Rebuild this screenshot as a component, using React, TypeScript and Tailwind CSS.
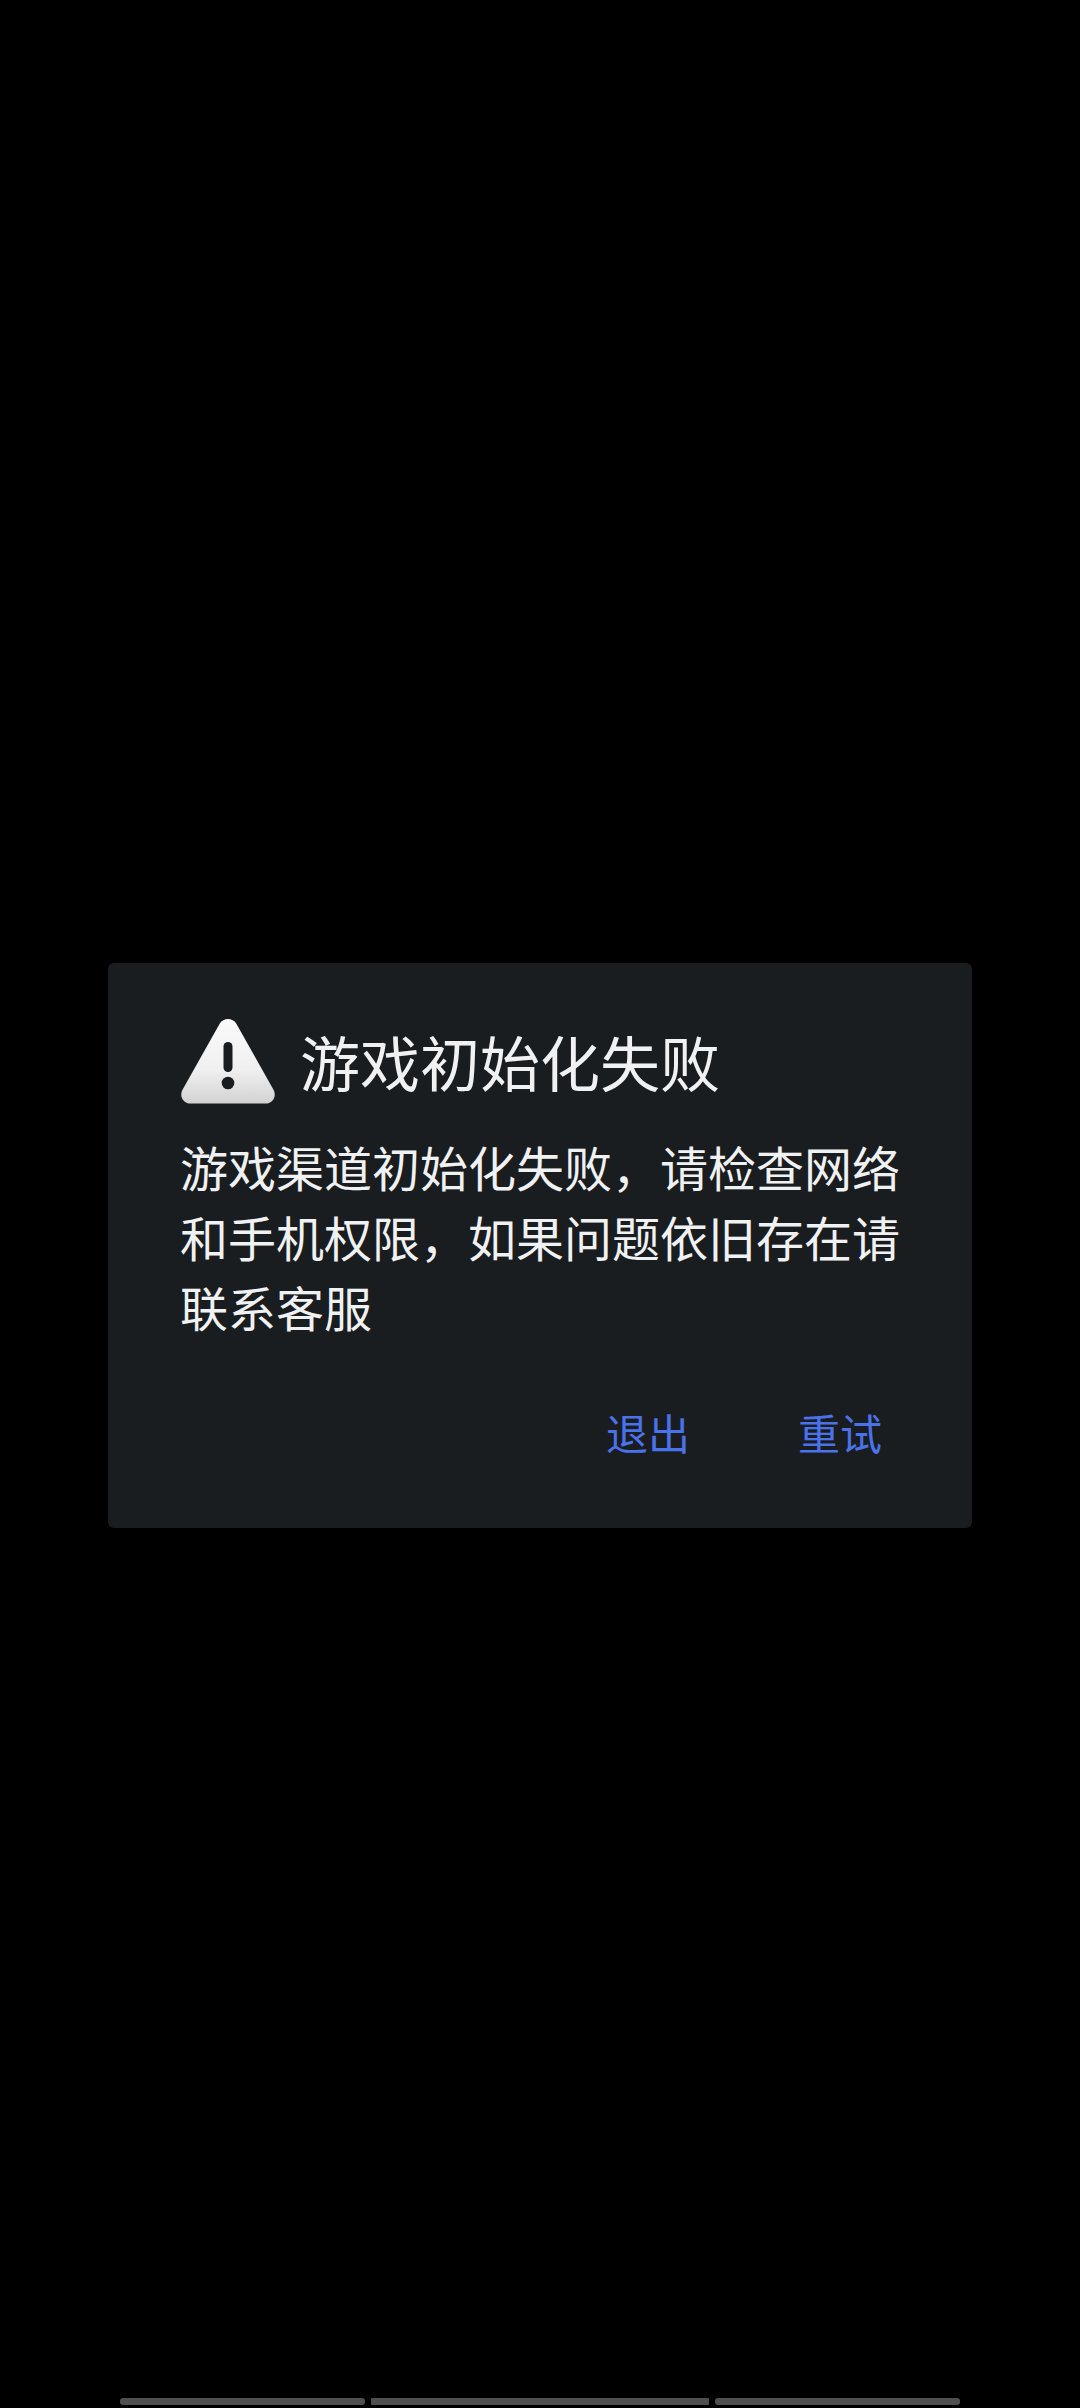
const cjk = "font-['Noto_Sans_CJK_SC','Noto_Sans',sans-serif]";

function WarningIcon() {
  return (
    <svg width="96" height="86" viewBox="0 0 96 86" className="shrink-0 blur-[0.6px]">
      <defs>
        <linearGradient id="warn" x1="0" y1="0" x2="0" y2="1">
          <stop offset="0" stopColor="#fafafa" />
          <stop offset="0.6" stopColor="#f0f0f0" />
          <stop offset="1" stopColor="#d2d2d2" />
        </linearGradient>
      </defs>
      <path
        d="M39.800 5.500c3.700-6 12.700-6 16.400 0l37.400 66.500c3.300 6-.9 13.500-7.800 13.500H10.200c-6.900 0-11.100-7.500-7.800-13.500L39.800 5.500z"
        fill="url(#warn)"
      />
      <rect x="43.500" y="24" width="9" height="30" rx="4.500" fill="#1a1d1f" />
      <circle cx="48" cy="65" r="6.300" fill="#1a1d1f" />
    </svg>
  );
}

export default function App() {
  return (
    <div className={`h-[2408px] w-[1080px] bg-black flex flex-col justify-between pt-[963px] pb-[3px] overflow-hidden ${cjk}`}>
      <div className="mx-[108px] h-[565px] rounded-[6px] bg-[#1a1d1f] px-[72px] flex flex-col">
        <div className="flex items-center gap-[24px] mt-[55px] h-[86px]">
          <WarningIcon />
          <h1 className="text-[60px] leading-[86px] font-normal text-[#f0f1f3] whitespace-nowrap">游戏初始化失败</h1>
        </div>
        <p className="mt-[27px] text-[48px] leading-[70px] text-[#f0f1f3] w-[730px]">
          游戏渠道初始化失败，请检查网络和手机权限，如果问题依旧存在请联系客服
        </p>
        <div className="mt-[61px] flex justify-end gap-[108px] pr-[18px]">
          <button className="text-[42px] leading-[60px] text-[#4a72ea]">退出</button>
          <button className="text-[42px] leading-[60px] text-[#4a72ea]">重试</button>
        </div>
      </div>

      <div className="flex justify-center gap-[6px]">
        <div className="w-[245px] h-[7px] rounded-[3px] bg-[#4f4f4f]" />
        <div className="w-[338px] h-[7px] rounded-[1px] bg-[#4f4f4f]" />
        <div className="w-[245px] h-[7px] rounded-[3px] bg-[#4f4f4f]" />
      </div>
    </div>
  );
}
